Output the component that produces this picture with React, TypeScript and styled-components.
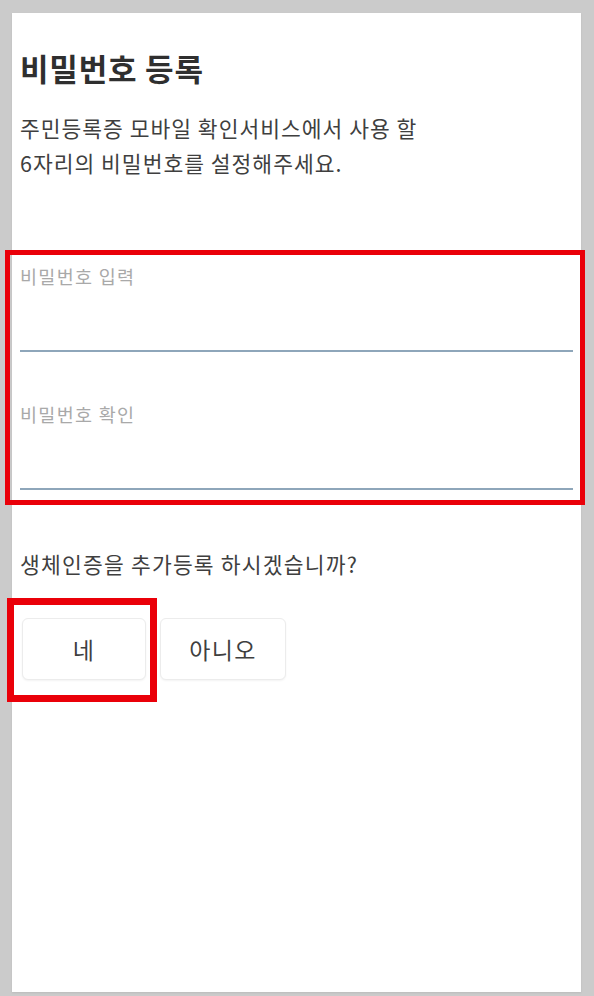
import type { FC, ReactElement } from "react";
import styled, { createGlobalStyle } from "styled-components";

const GlobalStyle = createGlobalStyle`
    html, body {
        margin: 0;
        padding: 0;
        background: #cbcbcb;
    }
    body {
        font-family: "Noto Sans CJK KR", "Noto Sans", sans-serif;
        color: #3d3d3d;
    }
`;

const Page = styled.div`
    padding: 13px 13px 4px 12px;
    box-sizing: border-box;
    min-height: 996px;
`;

const Panel = styled.main`
    background: #fff;
    height: 979px;
    padding: 35px 8px 0 8px;
    box-sizing: border-box;
    box-shadow: 0 1px 2px rgba(0, 0, 0, 0.08);
`;

const Title = styled.h1`
    margin: 0;
    font-size: 31px;
    line-height: 40px;
    font-weight: 700;
    color: #2f2f2f;
    letter-spacing: 0.8px;
`;

const Description = styled.p`
    margin: 22px 0 0 0;
    font-size: 21.5px;
    line-height: 35px;
    color: #3f3f3f;
    letter-spacing: 1px;
`;

interface MarkProps {
    $top: number;
    $right: number;
    $bottom: number;
    $left: number;
    $width: number;
}

// red annotation frame drawn over the highlighted block
const Marked = styled.div<MarkProps>`
    position: relative;
    &::after {
        content: "";
        position: absolute;
        top: ${({ $top }) => -$top}px;
        right: ${({ $right }) => -$right}px;
        bottom: ${({ $bottom }) => -$bottom}px;
        left: ${({ $left }) => -$left}px;
        border: ${({ $width }) => $width}px solid #ea0009;
        pointer-events: none;
    }
`;

const Fields = styled.div`
    margin-top: 75px;
    padding: 10px 0;
    display: flex;
    flex-direction: column;
    gap: 51px;
`;

const Field = styled.label`
    display: flex;
    flex-direction: column;
`;

const FieldLabel = styled.span`
    font-size: 18.5px;
    line-height: 22px;
    color: #a9a9a9;
    letter-spacing: 1.3px;
`;

const FieldInput = styled.input`
    height: 65px;
    border: none;
    border-bottom: 2px solid #8ea6ba;
    outline: none;
    background: transparent;
    padding: 0;
    font-size: 18px;
    box-sizing: border-box;
`;

const Question = styled.p`
    margin: 50px 0 0 0;
    font-size: 21.5px;
    line-height: 28px;
    color: #3f3f3f;
    letter-spacing: 1.2px;
`;

const Choices = styled.div`
    margin-top: 40px;
    padding-left: 2px;
    display: flex;
    gap: 14px;
`;

interface ChoiceProps {
    $width: number;
}

const Choice = styled.button<ChoiceProps>`
    width: ${({ $width }) => $width}px;
    height: 62px;
    background: #fff;
    border: 1px solid #ececec;
    border-radius: 6px;
    box-shadow: 0 1px 2px rgba(0, 0, 0, 0.05);
    font-family: inherit;
    font-size: 23px;
    letter-spacing: 1.3px;
    color: #3f3f3f;
    cursor: pointer;
    display: block;
`;

const App: FC = (): ReactElement => {

    return (
        <>
            <GlobalStyle />
            <Page>
                <Panel>
                    <Title>비밀번호 등록</Title>
                    <Description>
                        주민등록증 모바일 확인서비스에서 사용 할<br />
                        6자리의 비밀번호를 설정해주세요.
                    </Description>
                    <Marked $top={5} $right={12} $bottom={5} $left={15} $width={5}>
                        <Fields>
                            <Field>
                                <FieldLabel>비밀번호 입력</FieldLabel>
                                <FieldInput type="password" inputMode="numeric" maxLength={6} />
                            </Field>
                            <Field>
                                <FieldLabel>비밀번호 확인</FieldLabel>
                                <FieldInput type="password" inputMode="numeric" maxLength={6} />
                            </Field>
                        </Fields>
                    </Marked>
                    <Question>생체인증을 추가등록 하시겠습니까?</Question>
                    <Choices>
                        <Marked $top={20} $right={11} $bottom={22} $left={15} $width={7}>
                            <Choice $width={124}>네</Choice>
                        </Marked>
                        <Choice $width={126}>아니오</Choice>
                    </Choices>
                </Panel>
            </Page>
        </>
    );

}

export default App;
